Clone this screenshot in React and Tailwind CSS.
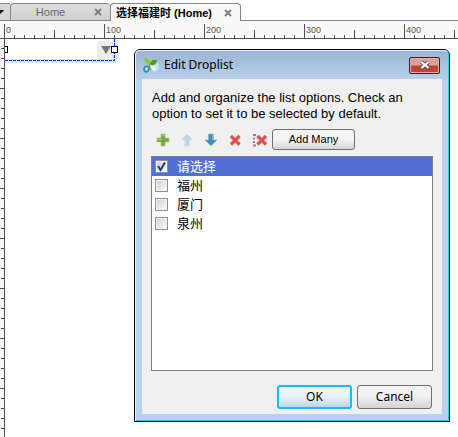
import { useState } from 'react'
import clsx from 'clsx'

const UI_FONT = "font-['Noto_Sans','Noto_Sans_CJK_SC',sans-serif]"
const ARIAL = "font-['Liberation_Sans','Noto_Sans_CJK_SC',sans-serif]"

const hundreds = [0, 100, 200, 300, 400]
const tens = [0, 1, 2, 3, 4, 5, 6, 7, 8, 9]
const rows = Array.from({ length: 60 }, (_, i) => i + 1)

const initialOptions = [
  { id: 'none', label: '请选择', checked: true },
  { id: 'fuzhou', label: '福州', checked: false },
  { id: 'xiamen', label: '厦门', checked: false },
  { id: 'quanzhou', label: '泉州', checked: false },
]

function CloseIcon() {
  return (
    <svg width="8" height="8" viewBox="0 0 8 8" aria-hidden="true">
      <path d="M1 1l6 6M7 1l-6 6" stroke="#808080" strokeWidth="2" />
    </svg>
  )
}

function PlusIcon() {
  return (
    <svg width="14" height="14" viewBox="0 0 14 14" aria-hidden="true">
      <path d="M5 1h4v4h4v4h-4v4h-4v-4h-4v-4h4z" fill="#7aa640" stroke="#b3c996" strokeWidth="0.700" />
      <path d="M6 2.500h2M2 6.500h4" stroke="#a9cf74" />
    </svg>
  )
}

function ArrowIcon({ down, light, dark }) {
  return (
    <svg width="14" height="14" viewBox="0 0 14 14" aria-hidden="true">
      <g transform={down ? 'rotate(180 7 7)' : undefined}>
        <path d="M7 1l6 6h-3.500v6h-5v-6h-3.500z" fill={dark} stroke={light} strokeWidth="0.800" />
        <path d="M5.500 7v5" stroke={light} />
      </g>
    </svg>
  )
}

function DeleteIcon() {
  return (
    <svg width="14" height="14" viewBox="0 0 14 14" aria-hidden="true">
      <path d="M3 3l8.500 8.500M11.500 3L3 11.500" stroke="#eab0ab" strokeWidth="4" />
      <path d="M3 3l8.500 8.500M11.500 3L3 11.500" stroke="#d5504c" strokeWidth="2.800" />
    </svg>
  )
}

function DeleteAllIcon() {
  return (
    <svg width="16" height="14" viewBox="0 0 16 14" aria-hidden="true">
      <path d="M1 2h3M1 5.500h2M1 9h2M1 12.500h3" stroke="#b07874" strokeWidth="1.800" />
      <path d="M5.500 3l8.500 8.500M14 3l-8.500 8.500" stroke="#eab0ab" strokeWidth="4" />
      <path d="M5.500 3l8.500 8.500M14 3l-8.500 8.500" stroke="#d5504c" strokeWidth="2.800" />
    </svg>
  )
}

function AppLogo() {
  return (
    <svg width="16" height="16" viewBox="0 0 16 16" aria-hidden="true">
      <circle cx="11" cy="9" r="5" fill="#c8e4f2" />
      <path d="M8 7l6 6-3 1.500-5-6z" fill="#eef7fb" />
      <path d="M8 8C5 8 2 6 1 1c4 0 7 2 7 7z" fill="#8cc83c" />
      <path d="M7 8c0-4 3-6 7-5 0 4-3 6-7 5z" fill="#4b9c28" />
      <path d="M7 7C6 9 6 11 8 13" stroke="#6fae3a" strokeWidth="1.500" fill="none" />
      <ellipse cx="3.500" cy="12" rx="2.200" ry="2.800" fill="#d6effa" stroke="#2a93c8" strokeWidth="2" transform="rotate(20 3.500 12)" />
    </svg>
  )
}

function TabBar() {
  return (
    <div className="flex h-[21px] items-end bg-white">
      <button aria-label="All tabs" className="flex h-[18px] w-[10px] items-center border-t border-b border-[#858585] bg-[#d6d6d6]">
        <svg width="5" height="4" viewBox="0 0 5 4" aria-hidden="true">
          <path d="M-3 0h7l-3.500 4z" fill="#000" />
        </svg>
      </button>
      <div className="flex h-[18px] w-[100px] items-center rounded-t border border-r-0 border-[#858585] bg-linear-to-b from-[#dedede] to-[#cfcfcf] pr-2">
        <button className={clsx('flex-1 pr-1 text-center text-[11px] leading-4 text-[#666]', ARIAL)}>Home</button>
        <button aria-label="Close Home"><CloseIcon /></button>
      </div>
      <div className="flex h-[18px] w-[131px] items-center justify-between rounded-t border border-b-0 border-[#858585] bg-[#f9f9f9] pr-2 pl-[5px]">
        <button className={clsx('text-[11px] leading-4 font-bold whitespace-nowrap text-black', ARIAL)}>选择福建时 (Home)</button>
        <button aria-label="Close 选择福建时"><CloseIcon /></button>
      </div>
      <div className="h-px flex-1 bg-[#858585]" />
    </div>
  )
}

function HorizontalRuler() {
  return (
    <div className="flex h-[18px] overflow-hidden border-b border-[#505050] bg-[#f9f9f9] pl-1">
      {hundreds.map((start) => (
        <div key={start} className="relative flex shrink-0 items-end">
          {tens.map((n) => (
            <div
              key={n}
              className={clsx('w-[10px] border-l border-[#505050]', n === 0 ? 'h-[14px]' : n === 5 ? 'h-2' : 'h-[3px]')}
            />
          ))}
          <span className={clsx('absolute top-[4px] left-[2px] text-[9px] leading-[10px] text-[#555]', ARIAL)}>{start}</span>
        </div>
      ))}
    </div>
  )
}

function VerticalRuler() {
  return (
    <div className="flex w-[5px] shrink-0 flex-col items-end overflow-hidden border-r border-[#505050] bg-[#f9f9f9]">
      {rows.map((n) => (
        <div key={n} className={clsx('h-[10px] shrink-0 border-b border-[#505050]', n % 5 === 0 ? 'w-1' : 'w-[3px]')} />
      ))}
    </div>
  )
}

function DroplistWidget() {
  return (
    <div className="relative h-[23px] w-[111px]">
      <select aria-label="Droplist" defaultValue="" className="block h-full w-full appearance-none bg-white text-xs outline-none">
        <option value=""></option>
      </select>
      <span className="pointer-events-none absolute top-[2px] right-[2px] flex h-[18px] w-[17px] items-center justify-center bg-[#ececec]">
        <svg width="10" height="8" viewBox="0 0 10 8" aria-hidden="true">
          <path d="M0 0h10l-5 8z" fill="#777" />
        </svg>
      </span>
      <svg className="pointer-events-none absolute top-0 left-0" width="113" height="25" viewBox="0 0 113 25" aria-hidden="true">
        <path d="M110 0v22H0" stroke="#cfe6fb" strokeWidth="4" fill="none" />
        <path d="M109.500 0v22M0 21.500h110" stroke="#0a28ff" strokeDasharray="3 1" fill="none" />
      </svg>
      <span className="absolute top-[7px] left-[-4px] h-[7px] w-[7px] border border-black bg-white" />
      <span className="absolute top-[7px] right-[-2px] h-[7px] w-[7px] border border-black bg-white" />
    </div>
  )
}

function OptionList({ options, selected, onSelect, onToggle }) {
  return (
    <ul className="mt-[6px] h-[215px] border border-[#828282] bg-white">
      {options.map((option) => (
        <li
          key={option.id}
          onClick={() => onSelect(option.id)}
          className={clsx('flex h-[19px] items-center gap-[9px] pl-[3px]', selected === option.id ? 'bg-[#536fd6] text-white' : 'text-black')}
        >
          <span className="relative flex">
            <input
              id={option.id}
              type="checkbox"
              checked={option.checked}
              onChange={() => onToggle(option.id)}
              className="peer h-[13px] w-[13px] appearance-none border border-[#8e8f8f] bg-linear-to-br from-[#ccc] to-white shadow-[inset_0_0_0_1px_#f4f4f4]"
            />
            <svg className="pointer-events-none absolute top-0 left-0 hidden peer-checked:block" width="13" height="13" viewBox="0 0 13 13" aria-hidden="true">
              <path d="M3 6l2.500 4L10 2.500" stroke="#25338f" strokeWidth="2" fill="none" />
            </svg>
          </span>
          <label htmlFor={option.id} className={clsx('text-[13px] leading-[19px]', UI_FONT)}>{option.label}</label>
        </li>
      ))}
    </ul>
  )
}

function EditDroplistDialog() {
  const [options, setOptions] = useState(initialOptions)
  const [selected, setSelected] = useState('none')

  const toggle = (id) => {
    setOptions(options.map((o) => ({ ...o, checked: o.id === id ? !o.checked : false })))
  }

  return (
    <div role="dialog" aria-labelledby="dialog-title" className="absolute top-[10px] left-[129px] w-[316px] rounded-t-md border border-black bg-[#b9d1ea]">
      <div className="rounded-t-[5px] border border-t-[#e4eef8] border-r-[#21cfe8] border-b-[#21cfe8] border-l-[#e4eef8] bg-linear-to-b from-[#9ab5d4] to-[#b9d1ea] to-[30px] px-[6px] pb-[6px]">
        <div className="flex h-[28px] items-center pl-px">
          <AppLogo />
          <h2 id="dialog-title" className={clsx('ml-[5px] flex-1 text-xs text-black', UI_FONT)}>Edit Droplist</h2>
          <button
            aria-label="Close"
            className="mr-[2px] flex h-[17px] w-[31px] items-center justify-center rounded-[2px] border border-[#4a1820] bg-linear-to-b from-[#dda095] from-45% to-[#bd4538] to-55% shadow-[inset_0_0_0_1px_#e3aca4]"
          >
            <svg width="12" height="10" viewBox="0 0 12 10" aria-hidden="true">
              <path d="M2.500 2l7 6M9.500 2l-7 6" stroke="#4b5160" strokeWidth="4" />
              <path d="M2.500 2l7 6M9.500 2l-7 6" stroke="#fff" strokeWidth="2.200" />
            </svg>
          </button>
        </div>

        <div className="bg-[#f0f0f0] px-[9px] pt-[11px] pb-[5px]">
          <p className={clsx('pl-px text-[13px] leading-4 text-black', ARIAL)}>
            Add and organize the list options. Check an option to set it to be selected by default.
          </p>

          <div className="mt-[7px] flex h-[21px] items-center">
            <div className="flex items-center gap-[10px] pl-[5px]">
              <button aria-label="Add"><PlusIcon /></button>
              <button aria-label="Move up"><ArrowIcon dark="#bfd4dc" light="#d8e5ea" /></button>
              <button aria-label="Move down"><ArrowIcon down dark="#3f8fb8" light="#86b9d0" /></button>
              <button aria-label="Delete"><DeleteIcon /></button>
              <button aria-label="Delete all"><DeleteAllIcon /></button>
            </div>
            <button className={clsx('ml-1 h-[21px] w-[83px] rounded-[3px] border border-[#707070] bg-linear-to-b from-[#f4f4f4] from-50% to-[#d4d4d4] text-[11px] text-black', ARIAL)}>
              Add Many
            </button>
          </div>

          <OptionList options={options} selected={selected} onSelect={setSelected} onToggle={toggle} />

          <div className={clsx('mt-[14px] flex justify-end gap-[5px] pr-px text-xs text-black', UI_FONT)}>
            <button className="h-6 w-[75px] rounded-[3px] border-2 border-[#18bdf2] bg-linear-to-b from-[#ecf3f7] from-45% to-[#bcd8e6]">OK</button>
            <button className="h-6 w-[75px] rounded-[3px] border border-[#707070] bg-linear-to-b from-[#f2f2f2] from-45% to-[#d2d2d2]">Cancel</button>
          </div>
        </div>
      </div>
    </div>
  )
}

export default function App() {
  return (
    <div className="flex h-screen flex-col overflow-hidden bg-white">
      <TabBar />
      <HorizontalRuler />
      <main className="flex min-h-0 flex-1">
        <VerticalRuler />
        <div className="relative flex-1 overflow-hidden">
          <DroplistWidget />
          <EditDroplistDialog />
        </div>
      </main>
    </div>
  )
}
